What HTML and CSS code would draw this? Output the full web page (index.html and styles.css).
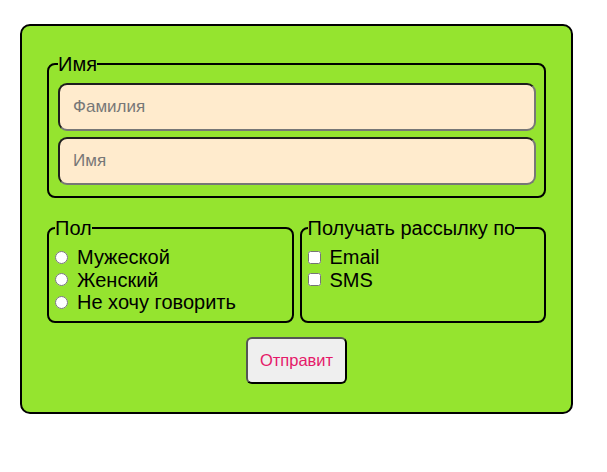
FILE: index.html
```html
<!DOCTYPE html>
<html lang="ru">
<head>
<meta charset="utf-8">
<link rel="stylesheet" href="styles.css">
</head>
<body>
<form class="form">
  <fieldset class="box name-box">
    <legend class="legend">Имя</legend>
    <input class="field" type="text" placeholder="Фамилия">
    <input class="field" type="text" placeholder="Имя">
  </fieldset>
  <div class="row">
    <fieldset class="box opt-box">
      <legend class="legend">Пол</legend>
      <label class="opt"><input class="mark" type="radio" name="g">Мужеской</label>
      <label class="opt"><input class="mark" type="radio" name="g">Женский</label>
      <label class="opt"><input class="mark" type="radio" name="g">Не хочу говорить</label>
    </fieldset>
    <fieldset class="box opt-box">
      <legend class="legend">Получать рассылку по</legend>
      <label class="opt"><input class="mark" type="checkbox">Email</label>
      <label class="opt"><input class="mark" type="checkbox">SMS</label>
    </fieldset>
  </div>
  <div class="actions">
    <button class="send" type="button">Отправит</button>
  </div>
</form>
</body>
</html>
```

FILE: styles.css
```css
html, body {
  margin: 0;
  padding: 0;
  background: #ffffff;
  font-family: "Liberation Sans", Arial, sans-serif;
}
body {
  padding: 24px 0 0 20px;
}
.form {
  box-sizing: border-box;
  width: 553px;
  height: 390px;
  background: #95e42f;
  border: 2px solid #000;
  border-radius: 10px;
  padding: 27px 25px 0 25px;
}
.box {
  margin: 0;
  border: 2px solid #000;
  border-radius: 8px;
  min-width: 0;
}
.legend {
  padding: 0;
  font-size: 20px;
  line-height: 22px;
  color: #000;
}
.name-box {
  padding: 8px 8px 11px 9px;
  display: flex;
  flex-direction: column;
  gap: 6px;
}
.field {
  box-sizing: border-box;
  height: 48px;
  width: 100%;
  margin: 0;
  background: #ffebcd;
  border: 2px solid;
  border-color: #1d1d1d #777 #777 #1d1d1d;
  border-radius: 9px;
  padding: 0 13px;
  font-family: "Liberation Sans", Arial, sans-serif;
  font-size: 17px;
  color: #000;
}
.field::placeholder {
  color: #777;
}
.row {
  display: flex;
  gap: 6px;
  margin-top: 19px;
}
.opt-box {
  flex: 1;
  padding: 7px 6px 0 6px;
  height: 106px;
  box-sizing: border-box;
}
.opt {
  display: flex;
  align-items: center;
  font-size: 20px;
  line-height: 22.5px;
  color: #000;
}
.mark {
  width: 13px;
  height: 13px;
  margin: 0 9px 0 0;
}
.actions {
  display: flex;
  justify-content: center;
  margin-top: 14px;
}
.send {
  box-sizing: border-box;
  width: 101px;
  height: 47px;
  background: #efefef;
  border: 2px solid;
  border-color: #555 #000 #000 #555;
  border-radius: 6px;
  font-family: "Liberation Sans", Arial, sans-serif;
  font-size: 16.5px;
  color: #e5196a;
  padding: 0;
}
```
